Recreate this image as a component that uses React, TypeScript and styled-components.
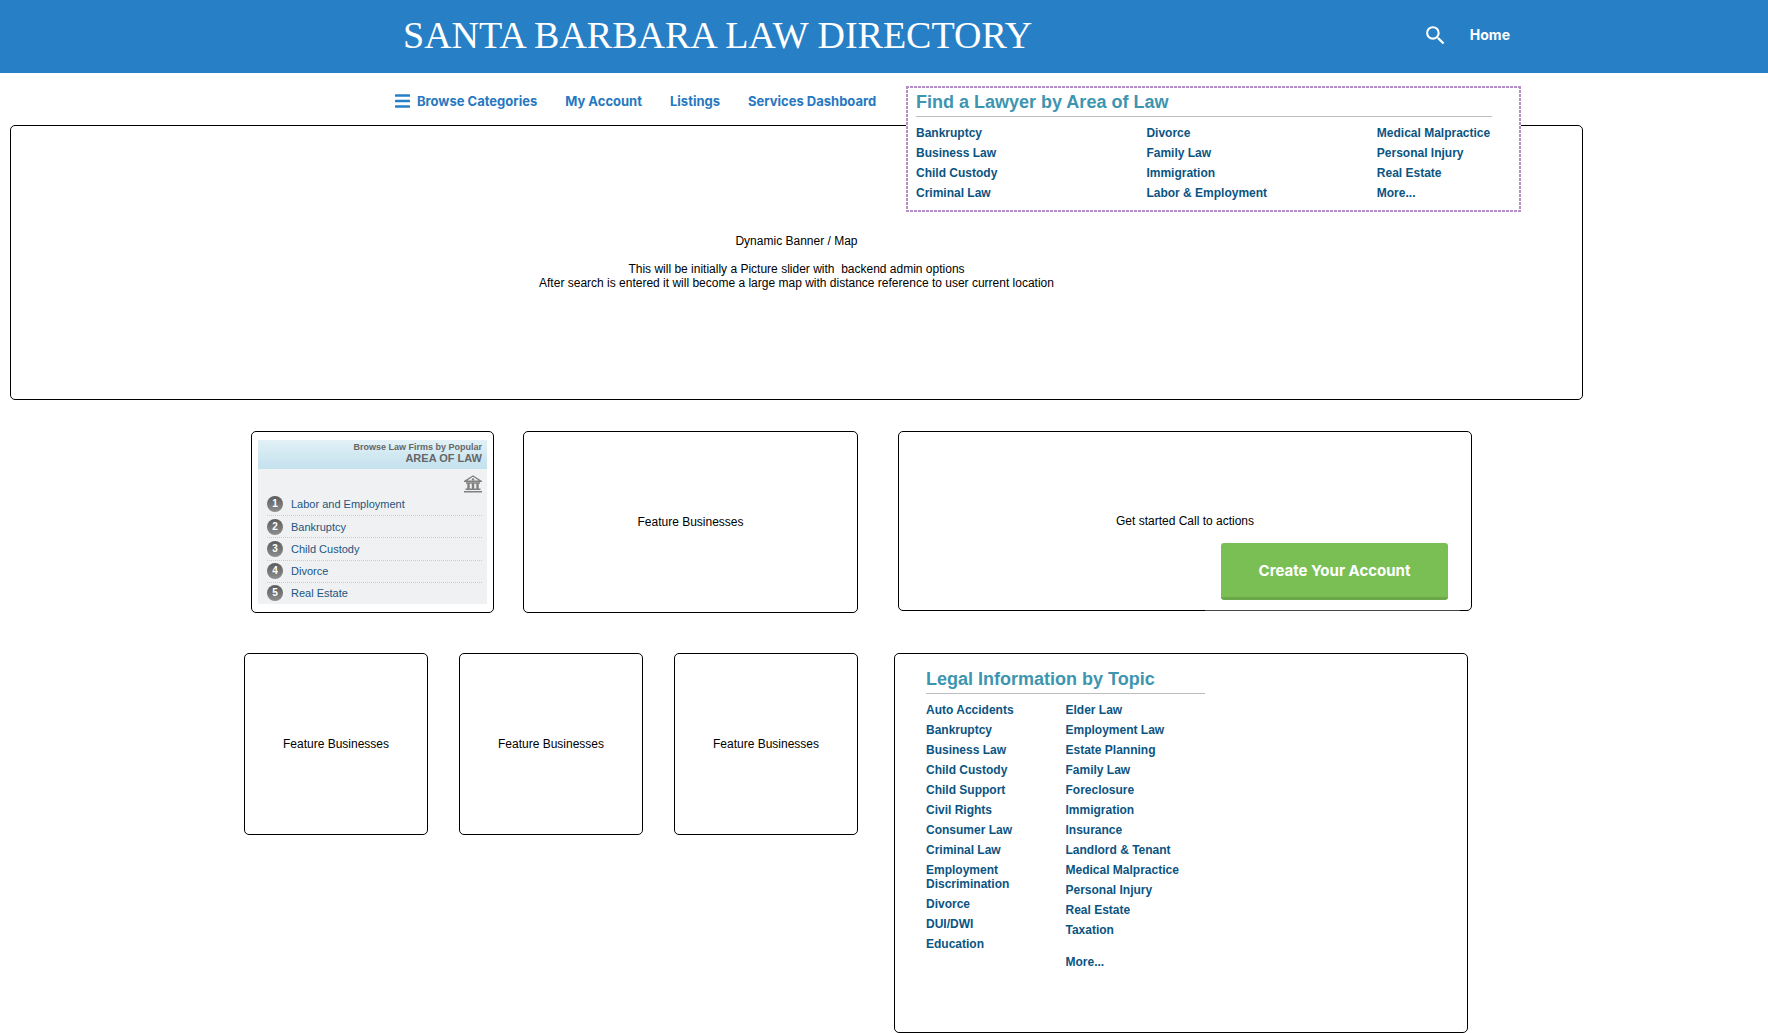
import React from "react";
import styled, { createGlobalStyle } from "styled-components";
import { MdSearch } from "react-icons/md";

const GlobalStyle = createGlobalStyle`
  *, *::before, *::after { box-sizing: border-box; }
  body {
    margin: 0;
    background: #fff;
    color: #000;
    font: 12px/14px "Liberation Sans", Arial, sans-serif;
  }
  a { color: inherit; text-decoration: none; }
  h1, h2, p, ul, ol { margin: 0; padding: 0; }
  ul, ol { list-style: none; }
`;

const rounded = `Inter, "Open Sans", sans-serif`;

const Header = styled.header`
  display: flex;
  align-items: center;
  justify-content: space-between;
  min-height: 73px;
  padding: 0 258px 3px 403px;
  background: #2780c6;
  color: #fff;
  @media (max-width: 1400px) { padding: 0 24px 3px; }
`;

const SiteTitle = styled.h1`
  font: 400 38px/48px "Liberation Serif", "Times New Roman", serif;
  text-transform: uppercase;
`;

const HeaderTools = styled.div`
  display: flex;
  align-items: center;
  gap: 22px;
`;

const SearchButton = styled.button`
  display: flex;
  padding: 0;
  border: 0;
  background: none;
  color: inherit;
  cursor: pointer;
`;

const HomeLink = styled.a`
  font: 700 14px/20px ${rounded};
`;

const NavBar = styled.nav`
  position: relative;
  display: flex;
  align-items: center;
  gap: 28px;
  min-height: 52px;
  padding: 3px 24px 0 395px;
  color: #2778c0;
  font: 700 13px/20px ${rounded};
  @media (max-width: 1400px) { padding-left: 24px; }
`;

const NavLink = styled.a`
  display: flex;
  align-items: center;
  gap: 7px;
`;

const dash = "#b48fc6 0 3px, transparent 3px 4px";

const AreaPanel = styled.section`
  position: absolute;
  z-index: 1;
  top: 13px;
  right: 247px;
  width: 615px;
  padding: 6px 29px 12px 10px;
  background:
    repeating-linear-gradient(90deg, ${dash}) top / 100% 2px no-repeat,
    repeating-linear-gradient(90deg, ${dash}) bottom / 100% 2px no-repeat,
    repeating-linear-gradient(180deg, ${dash}) left / 2px 100% no-repeat,
    repeating-linear-gradient(180deg, ${dash}) right / 2px 100% no-repeat,
    #fff;
  @media (max-width: 1400px) { right: 24px; }
`;

const SectionTitle = styled.h2`
  padding-bottom: 4px;
  border-bottom: 1px solid #bdbdbd;
  color: #3d95b0;
  font: 700 18px/20px "Liberation Sans", Arial, sans-serif;
`;

const LinkColumns = styled.div<{ $columns: string }>`
  display: grid;
  grid-template-columns: ${(p) => p.$columns};
  padding-top: 9px;
`;

const LinkList = styled.ul<{ $inset?: boolean }>`
  display: flex;
  flex-direction: column;
  gap: 6px;
  padding-right: ${(p) => (p.$inset ? "40px" : "0")};
  color: #0b5482;
  font: 700 12px/14px "Liberation Sans", Arial, sans-serif;
`;

const LinkItem = styled.li<{ $spaced?: boolean }>`
  padding-top: ${(p) => (p.$spaced ? "12px" : "0")};
`;

const Frame = styled.section`
  display: flex;
  align-items: center;
  justify-content: center;
  border: 1px solid #000;
  border-radius: 5px;
  background: #fff;
  text-align: center;
`;

const Banner = styled(Frame)`
  min-height: 275px;
  margin: 0 185px 0 10px;
  padding-bottom: 2px;
  white-space: pre-wrap;
  @media (max-width: 1400px) { margin-right: 10px; padding-top: 80px; }
`;

const CardRow = styled.div<{ $start: number; $end: number; $gap: number; $columns: string }>`
  display: grid;
  grid-template-columns: ${(p) => p.$columns};
  align-items: start;
  gap: ${(p) => p.$gap}px;
  padding: 0 ${(p) => p.$end}px 0 ${(p) => p.$start}px;
  @media (max-width: 1400px) { padding: 0 24px; }
`;

const CardGroup = styled.div<{ $columns: string; $gap: number }>`
  display: grid;
  grid-template-columns: ${(p) => p.$columns};
  gap: ${(p) => p.$gap}px;
`;

const Main = styled.main`
  display: flex;
  flex-direction: column;
`;

const Rows = styled.div`
  display: flex;
  flex-direction: column;
  gap: 40px;
  padding-top: 31px;
`;

const Card = styled(Frame)`
  min-height: 182px;
`;

const PopularCard = styled(Card)`
  align-items: stretch;
  padding: 8px 6px;
  text-align: left;
`;

const PopularBody = styled.div`
  display: flex;
  flex: 1;
  flex-direction: column;
  background: #f0f1f3;
`;

const PopularHead = styled.h2`
  display: flex;
  flex-direction: column;
  height: 29px;
  padding: 2px 5px 0;
  background: linear-gradient(#e2f1f6, #c3e1ee);
  color: #666;
  font: 700 9px/10px "Liberation Sans", Arial, sans-serif;
  text-align: right;
`;

const PopularHeadMain = styled.span`
  font-size: 11px;
  line-height: 12px;
`;

const IconLine = styled.div`
  display: flex;
  justify-content: flex-end;
  padding: 6px 5px 0;
`;

const RankList = styled.ol`
  display: grid;
  flex: 1;
  grid-auto-rows: 1fr;
  padding: 0 5px 0 9px;
`;

const RankItem = styled.li`
  display: flex;
  align-items: center;
  gap: 8px;
  color: #1c5580;
  font-size: 11px;
  & + & { border-top: 1px dotted #c9cbce; }
`;

const RankBadge = styled.span`
  display: flex;
  align-items: center;
  justify-content: center;
  width: 16px;
  height: 16px;
  border-radius: 50%;
  background: linear-gradient(#5c5c5c, #8e8e8e);
  color: #fff;
  font-size: 10px;
  font-weight: 700;
`;

const CtaCard = styled(Frame)`
  position: relative;
  min-height: 180px;
`;

const CtaPlate = styled.div`
  position: absolute;
  right: 11px;
  bottom: -1px;
  padding: 0 12px 11px 16px;
  background: rgba(255, 255, 255, 0.27);
`;

const CtaButton = styled.button`
  display: block;
  width: 227px;
  height: 57px;
  padding: 2px 0 0;
  border: 0;
  border-bottom: 3px solid #6aa84a;
  border-radius: 3px;
  background: #7abf53;
  color: #fff;
  font: 700 15px/20px ${rounded};
  cursor: pointer;
`;

const TopicCard = styled(Frame)`
  display: block;
  min-height: 380px;
  padding: 15px 31px;
  text-align: left;
`;

const TopicBody = styled.div`
  max-width: 279px;
`;

const areas = [
  ["Bankruptcy", "Business Law", "Child Custody", "Criminal Law"],
  ["Divorce", "Family Law", "Immigration", "Labor & Employment"],
  ["Medical Malpractice", "Personal Injury", "Real Estate", "More..."],
];

const topics = [
  [
    "Auto Accidents", "Bankruptcy", "Business Law", "Child Custody", "Child Support", "Civil Rights",
    "Consumer Law", "Criminal Law", "Employment Discrimination", "Divorce", "DUI/DWI", "Education",
  ],
  [
    "Elder Law", "Employment Law", "Estate Planning", "Family Law", "Foreclosure", "Immigration",
    "Insurance", "Landlord & Tenant", "Medical Malpractice", "Personal Injury", "Real Estate", "Taxation", "More...",
  ],
];

const popular = ["Labor and Employment", "Bankruptcy", "Child Custody", "Divorce", "Real Estate"];

const MenuIcon = () => (
  <svg width="15" height="14" viewBox="0 0 15 14" aria-hidden="true">
    <path d="M1 1.5h13M1 7h13M1 12.5h13" stroke="#2780c6" strokeWidth="2.6" strokeLinecap="round" />
  </svg>
);

const CourthouseIcon = () => (
  <svg width="18" height="18" viewBox="0 0 18 18" fill="none" stroke="#808080" aria-hidden="true">
    <path d="M1 6.200 9 1l8 5.200z" strokeWidth="1.4" />
    <circle cx="9" cy="4.400" r="1.2" fill="#808080" stroke="none" />
    <path d="M2 8h14M1.500 14.300h15M0 16.800h18" strokeWidth="1.4" />
    <path d="M4.500 8v6.500M9 8v6.500M13.500 8v6.500" strokeWidth="2.4" />
  </svg>
);

export default function App() {
  return (
    <>
      <GlobalStyle />
      <Header>
        <SiteTitle>Santa Barbara Law Directory</SiteTitle>
        <HeaderTools>
          <SearchButton type="button" aria-label="Search"><MdSearch size={25} /></SearchButton>
          <HomeLink href="#">Home</HomeLink>
        </HeaderTools>
      </Header>
      <NavBar>
        <NavLink href="#"><MenuIcon />Browse Categories</NavLink>
        <NavLink href="#">My Account</NavLink>
        <NavLink href="#">Listings</NavLink>
        <NavLink href="#">Services Dashboard</NavLink>
        <AreaPanel>
          <SectionTitle>Find a Lawyer by Area of Law</SectionTitle>
          <LinkColumns $columns="2fr 2fr 1fr">
            {areas.map((column) => (
              <LinkList key={column[0]}>
                {column.map((name) => <LinkItem key={name}><a href="#">{name}</a></LinkItem>)}
              </LinkList>
            ))}
          </LinkColumns>
        </AreaPanel>
      </NavBar>
      <Main>
        <Banner>
          <p>
            {"Dynamic Banner / Map\n\nThis will be initially a Picture slider with  backend admin options\n"}
            {"After search is entered it will become a large map with distance reference to user current location"}
          </p>
        </Banner>
        <Rows>
          <CardRow $start={251} $end={296} $gap={40} $columns="607fr 574fr">
            <CardGroup $columns="243fr 335fr" $gap={29}>
              <PopularCard>
                <PopularBody>
                  <PopularHead>
                    Browse Law Firms by Popular
                    <PopularHeadMain>AREA OF LAW</PopularHeadMain>
                  </PopularHead>
                  <IconLine><CourthouseIcon /></IconLine>
                  <RankList>
                    {popular.map((name, i) => (
                      <RankItem key={name}><RankBadge>{i + 1}</RankBadge><a href="#">{name}</a></RankItem>
                    ))}
                  </RankList>
                </PopularBody>
              </PopularCard>
              <Card>Feature Businesses</Card>
            </CardGroup>
            <CtaCard>
              Get started Call to actions
              <CtaPlate><CtaButton type="button">Create Your Account</CtaButton></CtaPlate>
            </CtaCard>
          </CardRow>
          <CardRow $start={244} $end={300} $gap={36} $columns="614fr 574fr">
            <CardGroup $columns="1fr 1fr 1fr" $gap={31}>
              <Card>Feature Businesses</Card>
              <Card>Feature Businesses</Card>
              <Card>Feature Businesses</Card>
            </CardGroup>
            <TopicCard>
              <TopicBody>
                <SectionTitle>Legal Information by Topic</SectionTitle>
                <LinkColumns $columns="1fr 1fr">
                  {topics.map((column, i) => (
                    <LinkList key={column[0]} $inset={i === 0}>
                      {column.map((name) => (
                        <LinkItem key={name} $spaced={name === "More..."}><a href="#">{name}</a></LinkItem>
                      ))}
                    </LinkList>
                  ))}
                </LinkColumns>
              </TopicBody>
            </TopicCard>
          </CardRow>
        </Rows>
      </Main>
    </>
  );
}
